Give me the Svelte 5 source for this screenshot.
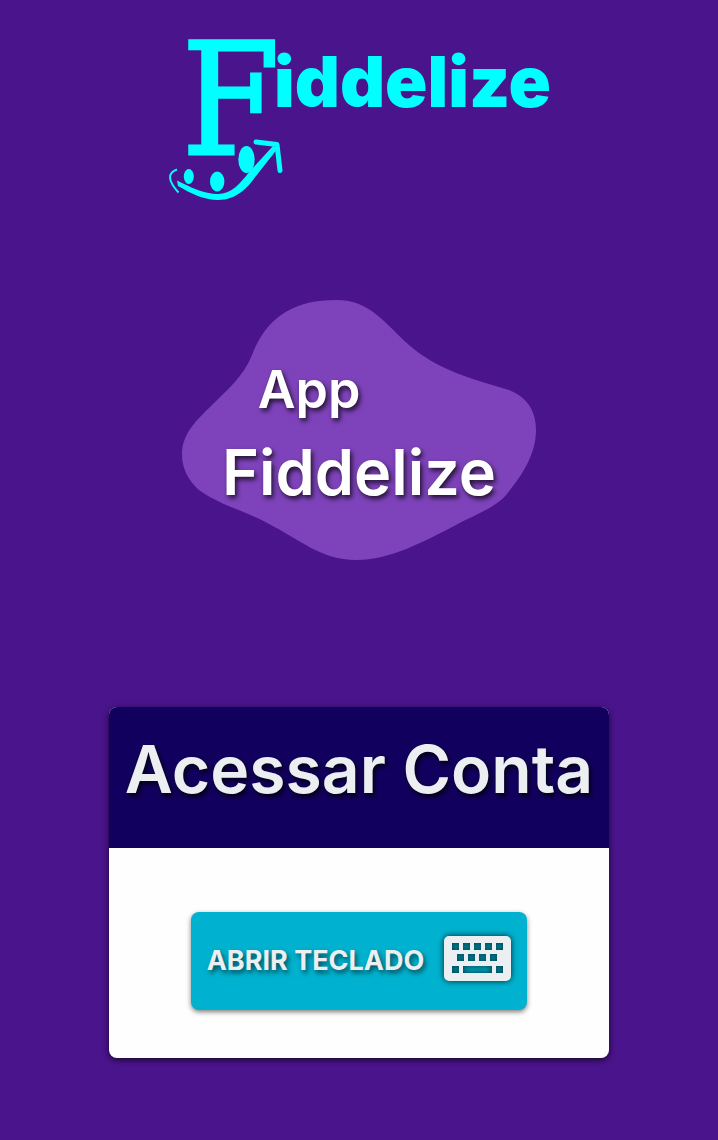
<script>
  let keyboardOpen = $state(false);

  const key = (x, y, w = 7) => `M${x} ${y}h${w}v7h-${w}z`;
  const keys = [
    ...[8, 19, 30, 41, 52].map((x) => key(x, 7)),
    ...[13, 24, 35, 46].map((x) => key(x, 18)),
    key(8, 30),
    key(19, 30, 29),
    key(52, 30)
  ].join('');
  const keyboard = 'M5 0h57a5 5 0 0 1 5 5v35a5 5 0 0 1-5 5H5a5 5 0 0 1-5-5V5a5 5 0 0 1 5-5z' + keys;
</script>

<main class="page">
  <svg class="logo" viewBox="167 0 384 202" role="img" aria-label="Fiddelize">
    <text class="initial" x="182" y="154">F</text>
    <text class="rest" x="274" y="107">iddelize</text>
    <ellipse cx="188.800" cy="176.500" rx="5" ry="7.5" />
    <ellipse cx="217.200" cy="181.500" rx="7.200" ry="10" />
    <ellipse cx="246.500" cy="159.500" rx="8.200" ry="13.500" />
    <path class="cheek" d="M177 169.500C167 173 168 181 178.500 192.500" />
    <path d="M177 180.500L178 186C190 193 204 200 218 200C237 200 248 187 256 176L278 148L273 146L250 171C240 184 231 194 218 194C204 194 190 187 177 180.500Z" />
    <path class="head" d="M256 142L277 144.500L280 170.500" />
  </svg>

  <section class="hero">
    <svg class="blob" viewBox="0 0 354 260" aria-hidden="true">
      <path d="M154 0C189 0 203 24 227 45C257 71 291 79 327 90C345 97 354 111 354 130C354 155 339 176 328 190C317 207 294 214 274 225C241 242 208 260 174 260C139 260 117 239 87 224C64 211 37 205 17 190C7 181 0 169 0 155C0 133 14 121 30 105C45 90 62 76 70 55C85 16 113 0 154 0Z" />
    </svg>
    <h1 class="title"><span class="kind">App</span> <span class="name">Fiddelize</span></h1>
  </section>

  <section class="card">
    <h2 class="card-head">Acessar Conta</h2>
    <div class="card-body">
      <button class="open" type="button" aria-pressed={keyboardOpen} onclick={() => (keyboardOpen = !keyboardOpen)}>
        <span class="label">ABRIR TECLADO</span>
        <svg class="keyboard" viewBox="0 0 67 45" aria-hidden="true">
          <path fill-rule="evenodd" d={keyboard} />
        </svg>
      </button>
    </div>
  </section>
</main>

<style>
  :global(body) {
    margin: 0;
    background: #4a148c;
  }
  .page {
    display: flex;
    flex-direction: column;
    align-items: center;
    box-sizing: border-box;
    min-height: 100vh;
    padding: 0 16px 80px;
    font-family: Inter, "Open Sans", sans-serif;
    font-weight: 600;
    color: #eceff1;
  }
  .logo {
    width: 100%;
    max-width: 384px;
    fill: #0ff;
  }
  .initial {
    font-family: "DejaVu Serif Condensed", "DejaVu Serif", serif;
    font-size: 156px;
    font-weight: 400;
    stroke: #0ff;
    stroke-width: 3;
  }
  .rest {
    font-family: Inter, sans-serif;
    font-size: 70px;
    font-weight: 900;
  }
  .cheek,
  .head {
    fill: none;
    stroke: #0ff;
    stroke-width: 2;
  }
  .head {
    stroke-width: 5;
    stroke-linecap: round;
    stroke-linejoin: round;
  }
  .hero {
    display: grid;
    width: 100%;
    max-width: 354px;
    margin-top: 98px;
  }
  .blob,
  .title {
    grid-area: 1 / 1;
  }
  .blob {
    width: 100%;
    fill: #7e43bb;
  }
  .title {
    display: flex;
    flex-direction: column;
    align-self: center;
    align-items: center;
    margin: 0;
    padding-top: 4px;
    font-weight: 600;
    color: #fff;
    text-shadow: 2px 3px 5px rgba(0, 0, 0, 0.75);
  }
  .kind {
    padding-right: 100px;
    font-size: 52px;
    line-height: 80px;
  }
  .name {
    font-size: 63px;
    line-height: 84px;
  }
  .card {
    width: 100%;
    max-width: 500px;
    margin-top: 147px;
    overflow: hidden;
    border-radius: 8px;
    background: #fefefe;
    box-shadow: 0 2px 6px rgba(0, 0, 0, 0.7);
  }
  .card-head {
    margin: 0;
    padding: 14px 0 31px;
    font-size: 66px;
    font-weight: 600;
    line-height: 96px;
    text-align: center;
    white-space: nowrap;
    background: #12005e;
    text-shadow: 2px 3px 5px rgba(0, 0, 0, 0.8);
  }
  .card-body {
    display: flex;
    justify-content: center;
    padding: 64px 16px 48px;
  }
  .open {
    display: flex;
    align-items: center;
    gap: 20px;
    padding: 22px 16px 28px;
    border: 0;
    border-radius: 8px;
    font: inherit;
    font-size: 27px;
    font-weight: 700;
    line-height: 42px;
    white-space: nowrap;
    color: #eceff1;
    background: #00b2cf;
    box-shadow: 0 2px 5px rgba(0, 0, 0, 0.5);
    text-shadow: 2px 3px 5px rgba(0, 0, 0, 0.6);
    cursor: pointer;
  }
  .label {
    padding-top: 6px;
  }
  .keyboard {
    width: 67px;
    fill: #eceff1;
    filter: drop-shadow(0 0 3px rgba(0, 0, 0, 0.8));
  }
</style>
